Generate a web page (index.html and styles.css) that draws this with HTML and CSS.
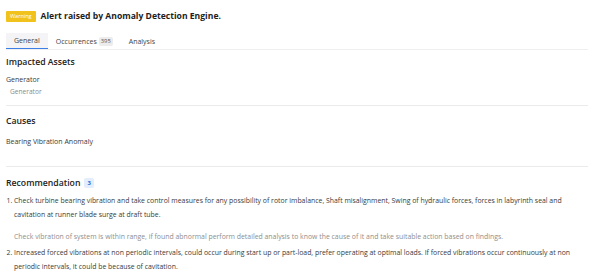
FILE: index.html
```html
<!DOCTYPE html>
<html>
<head>
<meta charset="utf-8">
<link rel="stylesheet" href="styles.css">
</head>
<body>
<div class="page">
  <header class="head">
    <span class="sev">Warning</span>
    <h1 class="title">Alert raised by Anomaly Detection Engine.</h1>
  </header>
  <nav class="tabs">
    <span class="tab active">General</span>
    <span class="tab">Occurrences <span class="count">395</span></span>
    <span class="tab">Analysis</span>
  </nav>
  <section class="sec first">
    <h2 class="sec-title">Impacted Assets</h2>
    <div class="asset">Generator</div>
    <div class="asset-sub">Generator</div>
  </section>
  <section class="sec mid">
    <h2 class="sec-title">Causes</h2>
    <div class="cause">Bearing Vibration Anomaly</div>
  </section>
  <section class="sec last">
    <h2 class="sec-title">Recommendation <span class="num">3</span></h2>
    <ol class="recs">
      <li>
        <p class="rec">Check turbine bearing vibration and take control measures for any possibility of rotor imbalance, Shaft misalignment, Swing of hydraulic forces, forces in labyrinth seal and cavitation at runner blade surge at draft tube.</p>
        <p class="rec-note">Check vibration of system is within range, if found abnormal perform detailed analysis to know the cause of it and take suitable action based on findings.</p>
      </li>
      <li>
        <p class="rec">Increased forced vibrations at non periodic intervals, could occur during start up or part-load, prefer operating at optimal loads. If forced vibrations occur continuously at non periodic intervals, it could be because of cavitation.</p>
      </li>
    </ol>
  </section>
</div>
</body>
</html>
```
FILE: styles.css
```css
* { box-sizing: border-box; }
html, body { margin: 0; padding: 0; background: #fff; }
body { font-family: "Open Sans", "Liberation Sans", sans-serif; color: #3a3a3a; }
.page { padding: 0 2px 0 6px; }
.head { display: flex; align-items: flex-start; gap: 5px; padding-top: 11px; height: 33px; }
.sev { background: #f1c21c; color: #fff; font-size: 5.5px; padding: 2px 4px; line-height: 7px; border-radius: 1px; }
.title { margin: 0; font-size: 8.6px; font-weight: 700; color: #1e1e1e; line-height: 11px; }
.tabs { display: flex; border-bottom: 1px solid #efefef; }
.tab { font-size: 7px; color: #444; padding: 4px 8px; line-height: 7px; display: flex; align-items: center; gap: 2px; height: 16px; }
.tab.active { background: #f4f4f6; border-bottom: 1.5px solid #3b7ee8; }
.count { font-size: 5.8px; color: #555; background: #ececec; padding: 1px 2px; border-radius: 2px; }
.sec { border-bottom: 1px solid #ebebeb; }
.sec.first { padding: 5px 0 7px; }
.sec.mid { padding: 8px 0 18px; }
.sec.last { padding: 9px 0 0; border-bottom: none; }
.sec-title { margin: 0; font-size: 8.7px; font-weight: 600; color: #222; line-height: 14px; display: flex; align-items: center; gap: 4px; }
.asset { font-size: 7px; margin-top: 5px; line-height: 12px; color: #3a3a3a; }
.asset-sub { font-size: 6.6px; color: #8a8a8a; padding-left: 4px; line-height: 12px; }
.cause { font-size: 7px; margin-top: 8px; line-height: 12px; }
.num { font-size: 6px; background: #e3edfb; color: #2d6bd0; padding: 1px 3px; border-radius: 2px; line-height: 8px; font-weight: 700; }
.recs { margin: 4px 0 0; padding-left: 8px; font-size: 6.9px; }
.recs li { margin-bottom: 3.5px; }
.rec { margin: 0; line-height: 14px; color: #3a3a3a; }
.rec-note { margin: 7.5px 0 0; line-height: 13px; color: #8e8e8e; }
```
